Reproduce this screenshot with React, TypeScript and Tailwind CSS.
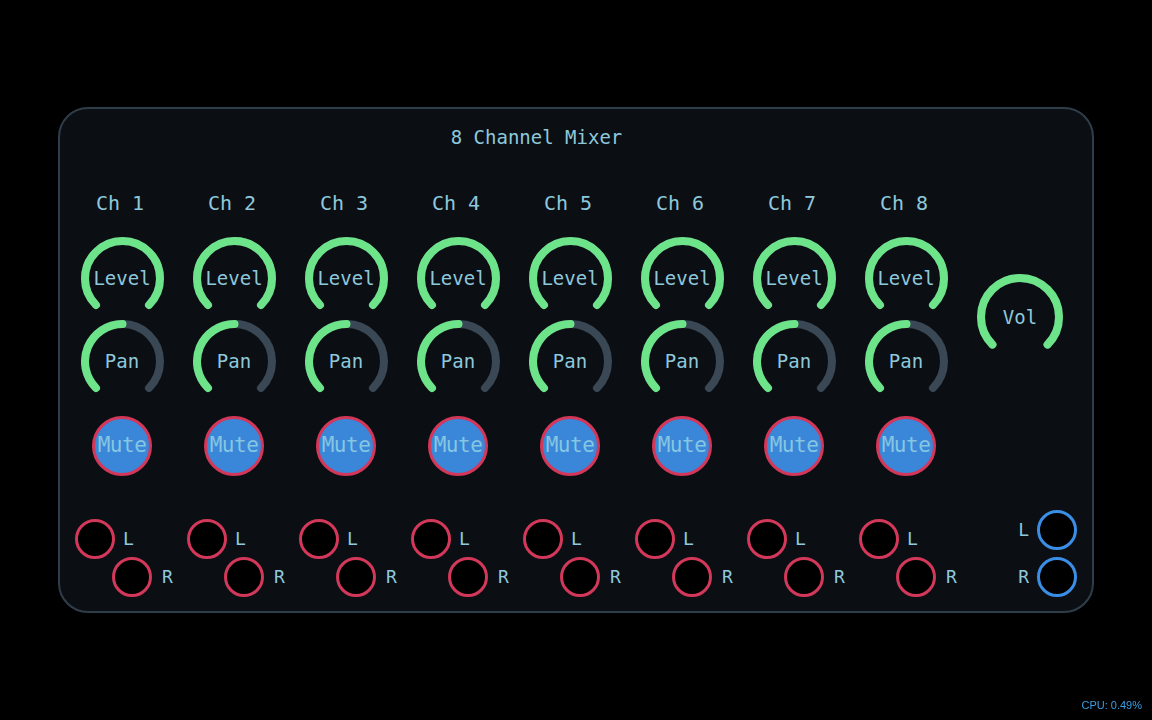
import React from "react"

const channels = [1, 2, 3, 4, 5, 6, 7, 8]

// angle in degrees, clockwise from 12 o'clock
function pt(cx: number, cy: number, r: number, a: number) {
  const rad = (a * Math.PI) / 180
  return [cx + r * Math.sin(rad), cy - r * Math.cos(rad)]
}

function arc(cx: number, cy: number, r: number, from: number, to: number) {
  const [x1, y1] = pt(cx, cy, r, from)
  const [x2, y2] = pt(cx, cy, r, to)
  const large = to - from > 180 ? 1 : 0
  return `M ${x1.toFixed(2)} ${y1.toFixed(2)} A ${r} ${r} 0 ${large} 1 ${x2.toFixed(2)} ${y2.toFixed(2)}`
}

function Knob({ label, value, r = 37.5 }: { label: string; value: number; r?: number }) {
  const w = 2 * r + 16
  const cx = w / 2
  const cy = r + 4
  const end = -135 + 270 * value
  return (
    <div className="relative h-[83px]" style={{ width: w }}>
      <svg width={w} height={83} className="block">
        <path d={arc(cx, cy, r, -135, 135)} fill="none" stroke="#3a4855" strokeWidth={8} strokeLinecap="round" />
        {value > 0 && (
          <path d={arc(cx, cy, r, -135, end)} fill="none" stroke="#6ee48a" strokeWidth={8} strokeLinecap="round" />
        )}
      </svg>
      <div
        className="absolute inset-x-0 flex items-center justify-center text-[19px] leading-none text-[#8ec8dc]"
        style={{ top: cy - 10, height: 20 }}
      >
        {label}
      </div>
    </div>
  )
}

function Jack({ blue }: { blue?: boolean }) {
  return (
    <div
      className={
        blue
          ? "h-[40px] w-[40px] rounded-full border-[3px] border-[#3a8ee6] bg-black"
          : "h-[40px] w-[40px] rounded-full border-[3px] border-[#d3385a] bg-black"
      }
    />
  )
}

function Channel({ n }: { n: number }) {
  return (
    <div className="flex w-[112px] flex-col items-center">
      <div className="h-[24px] pr-[4px] text-[20px] leading-[24px] text-[#8ec8dc]">Ch {n}</div>
      <div className="mt-[22px]">
        <Knob label="Level" value={1} />
      </div>
      <Knob label="Pan" value={0.5} />
      <div className="mt-[13px] flex h-[60px] w-[60px] items-center justify-center rounded-full border-[3px] border-[#d3385a] bg-[#3a86d8] text-[21px] tracking-[-0.5px] text-[#86c6e2]">
        Mute
      </div>
      <div className="mt-[43px] flex w-full flex-col pl-[9px]">
        <div className="flex items-center gap-[8px]">
          <Jack />
          <span className="text-[18px] leading-none text-[#8ec8dc]">L</span>
        </div>
        <div className="-mt-[2px] ml-[37px] flex items-center gap-[10px]">
          <Jack />
          <span className="text-[18px] leading-none text-[#8ec8dc]">R</span>
        </div>
      </div>
    </div>
  )
}

export default function App() {
  return (
    <div
      className="flex min-h-screen items-center justify-center bg-black"
      style={{ fontFamily: '"DejaVu Sans Mono", "Liberation Mono", monospace' }}
    >
      <div className="flex h-[506px] w-[1036px] flex-col rounded-[30px] border-2 border-[#2f3e4b] bg-[#0b0f13] pt-[16px] pb-[14px] pl-[6px] pr-[15px]">
        <div className="h-[24px] pr-[70px] text-center text-[19px] leading-[24px] text-[#8ec8dc]">8 Channel Mixer</div>
        <div className="mt-[42px] flex flex-1">
          {channels.map((n) => (
            <Channel key={n} n={n} />
          ))}
          <div className="flex flex-1 flex-col">
            <div className="ml-[11px] mt-[83px]">
              <Knob label="Vol" value={1} r={39} />
            </div>
            <div className="mt-auto flex flex-col items-end gap-[7px]">
              <div className="flex items-center gap-[8px]">
                <span className="text-[18px] leading-none text-[#8ec8dc]">L</span>
                <Jack blue />
              </div>
              <div className="flex items-center gap-[8px]">
                <span className="text-[18px] leading-none text-[#8ec8dc]">R</span>
                <Jack blue />
              </div>
            </div>
          </div>
        </div>
      </div>
      <div
        className="fixed bottom-[7px] right-[10px] text-[11px] text-[#3a9ee4]"
        style={{ fontFamily: '"Liberation Sans", Arial, sans-serif' }}
      >
        CPU: 0.49%
      </div>
    </div>
  )
}
